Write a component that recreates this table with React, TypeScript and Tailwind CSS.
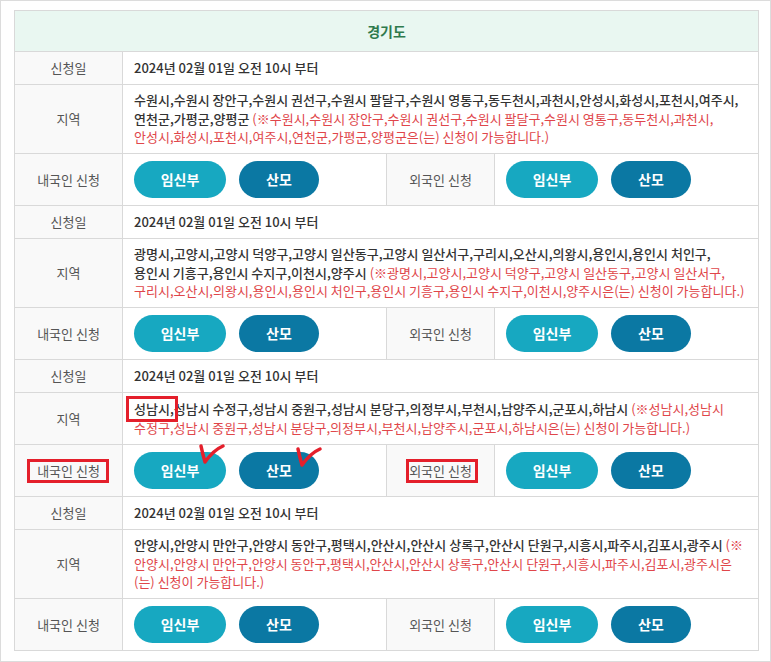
import React from "react";

type Seg = { t: string; red?: boolean; box?: boolean };
type Block = { lines: Seg[][]; mark?: boolean };

const blocks: Block[] = [
  {
    lines: [
      [{ t: "수원시,수원시 장안구,수원시 권선구,수원시 팔달구,수원시 영통구,동두천시,과천시,안성시,화성시,포천시,여주시," }],
      [
        { t: "연천군,가평군,양평군 " },
        { t: "(※수원시,수원시 장안구,수원시 권선구,수원시 팔달구,수원시 영통구,동두천시,과천시,", red: true },
      ],
      [{ t: "안성시,화성시,포천시,여주시,연천군,가평군,양평군은(는) 신청이 가능합니다.)", red: true }],
    ],
  },
  {
    lines: [
      [{ t: "광명시,고양시,고양시 덕양구,고양시 일산동구,고양시 일산서구,구리시,오산시,의왕시,용인시,용인시 처인구," }],
      [
        { t: "용인시 기흥구,용인시 수지구,이천시,양주시 " },
        { t: "(※광명시,고양시,고양시 덕양구,고양시 일산동구,고양시 일산서구,", red: true },
      ],
      [{ t: "구리시,오산시,의왕시,용인시,용인시 처인구,용인시 기흥구,용인시 수지구,이천시,양주시은(는) 신청이 가능합니다.)", red: true }],
    ],
  },
  {
    mark: true,
    lines: [
      [
        { t: "성남시,", box: true },
        { t: "성남시 수정구,성남시 중원구,성남시 분당구,의정부시,부천시,남양주시,군포시,하남시 " },
        { t: "(※성남시,성남시", red: true },
      ],
      [{ t: "수정구,성남시 중원구,성남시 분당구,의정부시,부천시,남양주시,군포시,하남시은(는) 신청이 가능합니다.)", red: true }],
    ],
  },
  {
    lines: [
      [
        { t: "안양시,안양시 만안구,안양시 동안구,평택시,안산시,안산시 상록구,안산시 단원구,시흥시,파주시,김포시,광주시 " },
        { t: "(※", red: true },
      ],
      [{ t: "안양시,안양시 만안구,안양시 동안구,평택시,안산시,안산시 상록구,안산시 단원구,시흥시,파주시,김포시,광주시은", red: true }],
      [{ t: "(는) 신청이 가능합니다.)", red: true }],
    ],
  },
];

const label = "bg-[#f9f9f9] text-center text-[13px] text-[#555] border border-[#d9d9d9] align-middle";

function Check({ className }: { className: string }) {
  return (
    <svg className={className} width="28" height="26" viewBox="0 0 28 26" fill="none">
      <path
        d="M3 3 C4 8 5 12 7 19 C12 12 18 6 25 3"
        stroke="#e41f2b"
        strokeWidth="3.5"
        strokeLinecap="round"
        strokeLinejoin="round"
      />
    </svg>
  );
}

function Buttons({ mark }: { mark?: boolean }) {
  return (
    <div className="flex items-center gap-[13px] pl-[11px]">
      <div className="relative">
        <button className="w-[92px] h-[37px] rounded-full bg-[#17a8c1] text-white text-[14px] font-bold">
          임신부
        </button>
        {mark && <Check className="absolute left-[64px] top-[-9px]" />}
      </div>
      <div className="relative">
        <button className="w-[80px] h-[37px] rounded-full bg-[#0b78a3] text-white text-[14px] font-bold">
          산모
        </button>
        {mark && <Check className="absolute left-[56px] top-[-6px]" />}
      </div>
    </div>
  );
}

function Boxed({ children, className }: { children: React.ReactNode; className: string }) {
  return (
    <span className="relative">
      {children}
      <span className={`absolute border-[3px] border-[#e41f2b] ${className}`} />
    </span>
  );
}

export default function App() {
  return (
    <div
      className="w-[771px] h-[662px] border border-[#dcdcdc] bg-white pl-[13px] pt-[9px]"
      style={{ fontFamily: '"Noto Sans CJK KR", "Noto Sans", sans-serif' }}
    >
      <table className="w-[744px] border-collapse table-fixed">
        <colgroup>
          <col className="w-[108px]" />
          <col className="w-[264px]" />
          <col className="w-[108px]" />
          <col className="w-[264px]" />
        </colgroup>
        <tbody>
          <tr className="h-[41px]">
            <td colSpan={4} className="bg-[#e9f7f1] border border-[#d9d9d9] text-center text-[14px] font-bold text-[#2f7a4d]">
              경기도
            </td>
          </tr>
          {blocks.map((b, i) => (
            <React.Fragment key={i}>
              <tr className="h-[33px]">
                <td className={label}>신청일</td>
                <td colSpan={3} className="border border-[#d9d9d9] pl-[11px] text-[13px] text-[#333] font-medium">
                  2024년 02월 01일 오전 10시 부터
                </td>
              </tr>
              <tr className={b.lines.length === 3 ? "h-[69px]" : "h-[52px]"}>
                <td className={label}>지역</td>
                <td colSpan={3} className="border border-[#d9d9d9] pl-[11px] text-[13px] leading-[18.5px] font-medium text-[#333] whitespace-nowrap">
                  {b.lines.map((line, j) => (
                    <div key={j}>
                      {line.map((s, k) =>
                        s.box ? (
                          <Boxed key={k} className="left-[-8px] right-[-4px] top-[-3px] bottom-[-4px]">
                            {s.t}
                          </Boxed>
                        ) : (
                          <span key={k} className={s.red ? "text-[#e0464a] font-normal" : ""}>
                            {s.t}
                          </span>
                        ),
                      )}
                    </div>
                  ))}
                </td>
              </tr>
              <tr className="h-[52px]">
                <td className={label}>
                  {b.mark ? (
                    <Boxed className="left-[-10px] right-[-9px] top-[-2px] bottom-[-3px]">내국인 신청</Boxed>
                  ) : (
                    "내국인 신청"
                  )}
                </td>
                <td className="border border-[#d9d9d9]">
                  <Buttons mark={b.mark} />
                </td>
                <td className={label}>
                  {b.mark ? (
                    <Boxed className="left-[-3px] right-[-6px] top-[-2px] bottom-[-3px]">외국인 신청</Boxed>
                  ) : (
                    "외국인 신청"
                  )}
                </td>
                <td className="border border-[#d9d9d9]">
                  <Buttons />
                </td>
              </tr>
            </React.Fragment>
          ))}
        </tbody>
      </table>
    </div>
  );
}
